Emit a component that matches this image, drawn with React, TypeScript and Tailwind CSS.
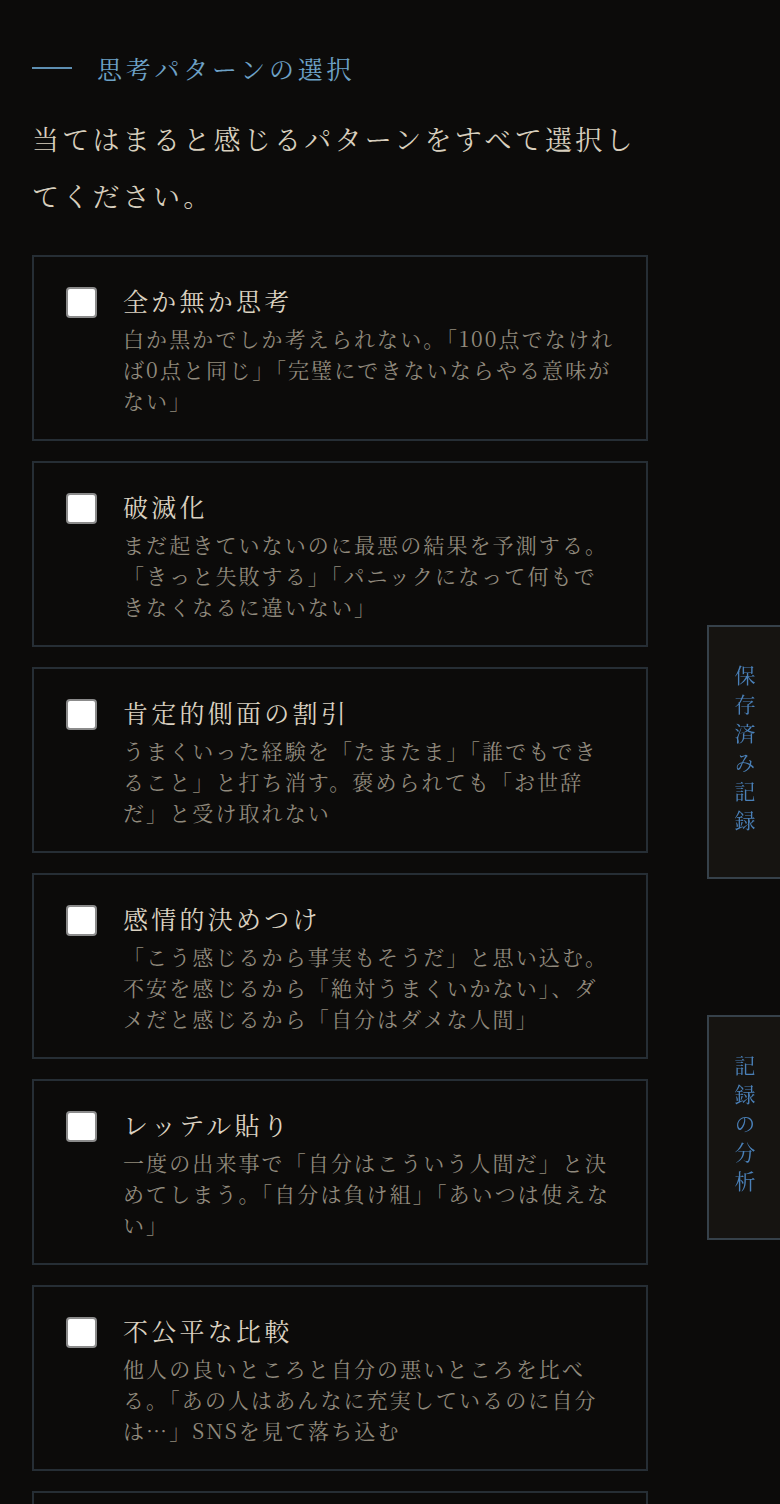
import React from "react";

const patterns = [
  {
    title: "全か無か思考",
    desc: "白か黒かでしか考えられない。「100点でなければ0点と同じ」「完璧にできないならやる意味がない」",
  },
  {
    title: "破滅化",
    desc: "まだ起きていないのに最悪の結果を予測する。「きっと失敗する」「パニックになって何もできなくなるに違いない」",
  },
  {
    title: "肯定的側面の割引",
    desc: "うまくいった経験を「たまたま」「誰でもできること」と打ち消す。褒められても「お世辞だ」と受け取れない",
  },
  {
    title: "感情的決めつけ",
    desc: "「こう感じるから事実もそうだ」と思い込む。不安を感じるから「絶対うまくいかない」、ダメだと感じるから「自分はダメな人間」",
  },
  {
    title: "レッテル貼り",
    desc: "一度の出来事で「自分はこういう人間だ」と決めてしまう。「自分は負け組」「あいつは使えない」",
  },
  {
    title: "不公平な比較",
    desc: "他人の良いところと自分の悪いところを比べる。「あの人はあんなに充実しているのに自分は…」SNSを見て落ち込む",
  },
  {
    title: "べき思考",
    desc: "「〜すべき」「〜しなければならない」と自分や他人を縛る。守れないと罪悪感や怒りを感じる",
  },
];

const font = {
  fontFamily:
    '"Noto Serif CJK JP", "Noto Serif JP", "Liberation Serif", "Noto Sans CJK JP", serif',
};

function Card({ title, desc }: { title: string; desc: string }) {
  return (
    <label className="flex gap-[26px] border-2 border-[#262e35] bg-[#0c0b0a] pl-[32px] pr-[29px] pt-[30px] pb-[23px] cursor-pointer">
      <span className="h-[31px] w-[31px] shrink-0 rounded-[4px] border-2 border-[#8b8b8b] bg-white" />
      <div className="min-w-0 flex-1">
        <div className="text-[25px] leading-[26px] tracking-[0.13em] text-[#dbd2c1]">
          {title}
        </div>
        <p className="mt-[10px] text-[21px] leading-[31px] tracking-[0.1em] text-[#918a7d]">
          {desc}
        </p>
      </div>
    </label>
  );
}

export default function App() {
  return (
    <div className="min-h-screen bg-[#0c0b0a]" style={font}>
      <div className="w-[616px] ml-[32px] pt-[50px] pb-[40px]">
        <div className="flex h-[36px] items-center gap-[25px]">
          <span className="h-[2px] w-[40px] bg-[#5e8fb2]" />
          <h2 className="text-[25px] leading-[36px] tracking-[0.15em] text-[#6ea2c7]">
            思考パターンの選択
          </h2>
        </div>
        <p className="mt-[24px] text-[27px] leading-[57px] tracking-[0.12em] text-[#d8cfbe]">
          当てはまると感じるパターンをすべて選択してください。
        </p>
        <div className="mt-[31px] flex flex-col gap-[20px]">
          {patterns.map((p) => (
            <Card key={p.title} title={p.title} desc={p.desc} />
          ))}
        </div>
      </div>

      <div className="fixed right-[-2px] top-[625px] flex flex-col gap-[136px]">
        <button className="flex h-[254px] w-[75px] items-center justify-center border-2 border-[#36414a] bg-[#161411]">
          <span className="[writing-mode:vertical-rl] text-[21px] leading-[21px] tracking-[8px] text-[#4a80b8]">
            保存済み記録
          </span>
        </button>
        <button className="flex h-[225px] w-[75px] items-center justify-center border-2 border-[#36414a] bg-[#161411]">
          <span className="[writing-mode:vertical-rl] text-[21px] leading-[21px] tracking-[8px] text-[#4a80b8]">
            記録の分析
          </span>
        </button>
      </div>
    </div>
  );
}
